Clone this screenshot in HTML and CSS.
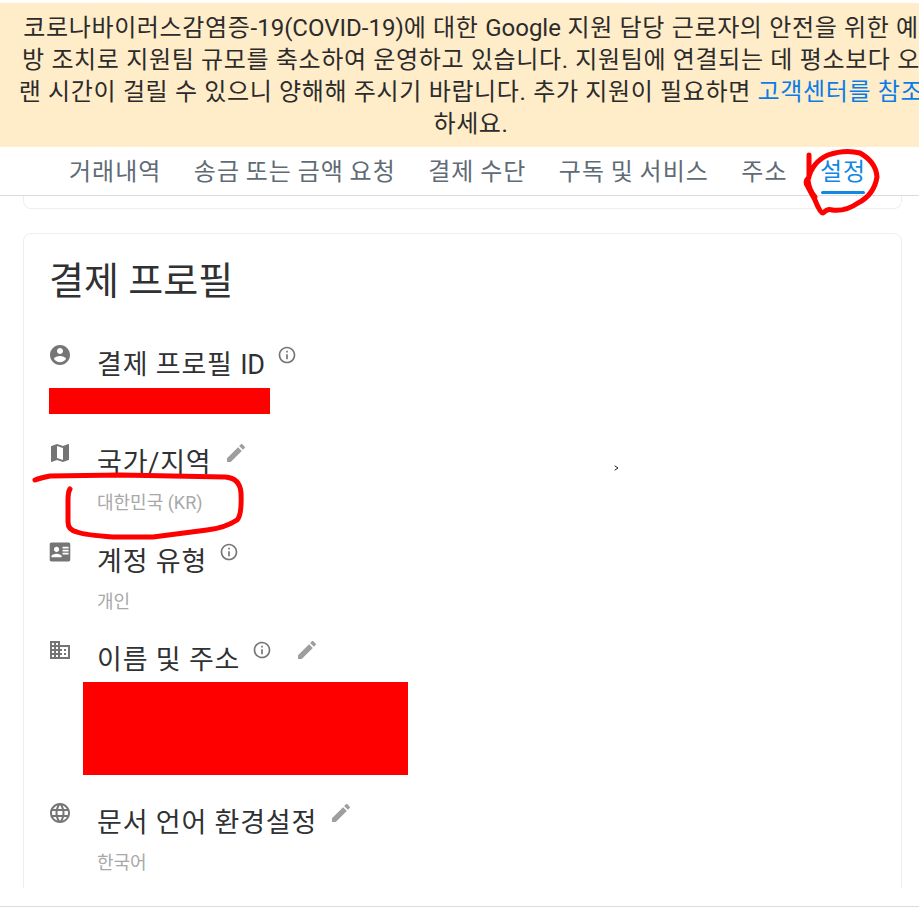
FILE: index.html
```html
<!DOCTYPE html>
<html lang="ko">
<head>
  <meta charset="UTF-8" />
  <title>결제 프로필</title>
  <link rel="stylesheet" href="styles.css">
</head>
<body>
  <svg class="icon-defs" width="0" height="0">
    <symbol id="i-account" viewBox="0 0 24 24"><path d="M12 2C6.48 2 2 6.48 2 12s4.48 10 10 10 10-4.48 10-10S17.52 2 12 2zm0 3c1.66 0 3 1.34 3 3s-1.34 3-3 3-3-1.34-3-3 1.34-3 3-3zm0 14.2c-2.5 0-4.71-1.28-6-3.22.03-1.99 4-3.08 6-3.08 1.99 0 5.97 1.09 6 3.08-1.29 1.94-3.5 3.22-6 3.22z"/></symbol>
    <symbol id="i-map" viewBox="0 0 24 24"><path d="M20.5 3l-.16.03L15 5.1 9 3 3.36 4.9c-.21.07-.36.25-.36.48V20.5c0 .28.22.5.5.5l.16-.03L9 18.9l6 2.1 5.64-1.9c.21-.07.36-.25.36-.48V3.5c0-.28-.22-.5-.5-.5zM15 19l-6-2.11V5l6 2.11V19z"/></symbol>
    <symbol id="i-contact" viewBox="-2 -2 28 28"><path fill-rule="evenodd" d="M22 1H2C.9 1 0 1.9 0 3v18c0 1.1.9 2 2 2h20c1.1 0 2-.9 2-2V3c0-1.1-.9-2-2-2zM8 6c1.66 0 3 1.34 3 3s-1.34 3-3 3-3-1.34-3-3 1.34-3 3-3zm6 12H2v-1c0-2 4-3.1 6-3.1s6 1.1 6 3.1v1zM15 6h7v2h-7zm0 3.5h7v2h-7zm0 3.5h7v2h-7z"/></symbol>
    <symbol id="i-domain" viewBox="0 0 24 24"><path d="M12 7V3H2v18h20V7H10zM6 19H4v-2h2v2zm0-4H4v-2h2v2zm0-4H4V9h2v2zm0-4H4V5h2v2zm4 12H8v-2h2v2zm0-4H8v-2h2v2zm0-4H8V9h2v2zm0-4H8V5h2v2zm10 12h-8v-2h2v-2h-2v-2h2v-2h-2V9h8v10zm-2-8h-2v2h2v-2zm0 4h-2v2h2v-2z"/></symbol>
    <symbol id="i-language" viewBox="0 0 24 24"><path d="M11.99 2C6.47 2 2 6.48 2 12s4.47 10 9.99 10C17.52 22 22 17.52 22 12S17.52 2 11.99 2zm6.93 6h-2.95c-.32-1.25-.78-2.45-1.38-3.56 1.84.63 3.37 1.91 4.33 3.56zM12 4.04c.83 1.2 1.48 2.53 1.91 3.96h-3.82c.43-1.43 1.08-2.76 1.91-3.96zM4.26 14C4.1 13.36 4 12.69 4 12s.1-1.36.26-2h3.38c-.08.66-.14 1.32-.14 2 0 .68.06 1.34.14 2H4.26zm.82 2h2.95c.32 1.25.78 2.45 1.38 3.56-1.84-.63-3.37-1.9-4.33-3.56zm2.95-8H5.08c.96-1.66 2.49-2.93 4.33-3.56C8.81 5.55 8.35 6.75 8.03 8zM12 19.96c-.83-1.2-1.48-2.53-1.91-3.96h3.82c-.43 1.43-1.08 2.76-1.91 3.96zM14.34 14H9.66c-.09-.66-.16-1.32-.16-2 0-.68.07-1.35.16-2h4.68c.09.65.16 1.32.16 2 0 .68-.07 1.34-.16 2zm.25 5.56c.6-1.11 1.06-2.31 1.38-3.56h2.95c-.96 1.65-2.49 2.93-4.33 3.56zM16.36 14c.08-.66.14-1.32.14-2 0-.68-.06-1.34-.14-2h3.38c.16.64.26 1.31.26 2s-.1 1.36-.26 2h-3.38z"/></symbol>
    <symbol id="i-info" viewBox="0 0 24 24"><path d="M11 7h2v2h-2zm0 4h2v6h-2zm1-9C6.48 2 2 6.48 2 12s4.48 10 10 10 10-4.48 10-10S17.52 2 12 2zm0 18c-4.41 0-8-3.59-8-8s3.59-8 8-8 8 3.59 8 8-3.59 8-8 8z"/></symbol>
    <symbol id="i-edit" viewBox="0 0 24 24"><path d="M3 17.25V21h3.75L17.81 9.94l-3.75-3.75L3 17.25zM20.71 7.04c.39-.39.39-1.02 0-1.41l-2.34-2.34c-.39-.39-1.02-.39-1.41 0l-1.83 1.83 3.75 3.75 1.83-1.83z"/></symbol>
  </svg>

  <div class="notice">
    코로나바이러스감염증<span class="latin">-19(COVID-19)</span>에 대한 <span class="latin">Google</span> 지원 담당 근로자의 안전을 위한 예<br>
    방 조치로 지원팀 규모를 축소하여 운영하고 있습니다. 지원팀에 연결되는 데 평소보다 오<br>
    랜 시간이 걸릴 수 있으니 양해해 주시기 바랍니다. 추가 지원이 필요하면 <a href="#">고객센터를 참조</a><br>
    하세요.
  </div>

  <nav class="tabs">
    <a href="#">거래내역</a>
    <a href="#">송금 또는 금액 요청</a>
    <a href="#">결제 수단</a>
    <a href="#">구독 및 서비스</a>
    <a href="#">주소</a>
    <a href="#" class="active">설정</a>
  </nav>

  <main class="content">
    <div class="card-stub"></div>

    <section class="card">
      <h1>결제 프로필</h1>

      <div class="row row-id">
        <svg class="row-icon"><use href="#i-account"/></svg>
        <div class="label"><span>결제 프로필 <span class="latin">ID</span></span> <svg class="info"><use href="#i-info"/></svg></div>
      </div>
      <div class="redact redact-id"></div>

      <div class="row row-country">
        <svg class="row-icon"><use href="#i-map"/></svg>
        <div>
          <div class="label">국가/지역 <svg class="edit"><use href="#i-edit"/></svg></div>
          <div class="value">대한민국 (KR)</div>
        </div>
      </div>

      <div class="row row-type">
        <svg class="row-icon"><use href="#i-contact"/></svg>
        <div>
          <div class="label">계정 유형 <svg class="info"><use href="#i-info"/></svg></div>
          <div class="value">개인</div>
        </div>
      </div>

      <div class="row row-name">
        <svg class="row-icon"><use href="#i-domain"/></svg>
        <div class="label">이름 및 주소 <svg class="info"><use href="#i-info"/></svg> <svg class="edit edit-far"><use href="#i-edit"/></svg></div>
      </div>
      <div class="redact redact-name"></div>

      <div class="row row-lang">
        <svg class="row-icon"><use href="#i-language"/></svg>
        <div>
          <div class="label">문서 언어 환경설정 <svg class="edit"><use href="#i-edit"/></svg></div>
          <div class="value">한국어</div>
        </div>
      </div>
    </section>
  </main>

  <footer class="page-foot"></footer>

  <!-- hand drawn marks on top of the screenshot -->
  <svg class="scribble" width="919" height="910" viewBox="0 0 919 910">
    <path d="M809 155 L809 177 Q804 182 808 187 L815 200 Q820 213 823 213 Q828 208 832 210 Q845 212 858 203 Q874 195 877 177 Q876 162 860 153 Q845 149 828 155 Q812 162 808 180 Q809 190 815 197"/>
    <path d="M35 480 Q40 478 50 476 L120 475 L225 477 Q240 478 241 493 Q242 515 237 520 Q225 528 207 530 L153 537 L113 537 Q85 535 77 532 Q68 530 68 522 L68 500 Q68 492 70 489"/>
    <path class="tick" d="M615 466 L618 468 L615 470"/>
  </svg>
</body>
</html>
```

FILE: styles.css
```css
* {
  box-sizing: border-box;
  margin: 0;
  padding: 0;
}

html,
body {
  height: 910px;
  overflow: hidden;
}

body {
  position: relative;
  width: 919px;
  padding-top: 3px;
  background: #fff;
  color: #2f3133;
  font-family: Roboto, "Noto Sans CJK KR", sans-serif;
}

a {
  text-decoration: none;
}

.icon-defs {
  position: absolute;
}

.notice {
  width: 942px;
  height: 144px;
  padding-top: 9px;
  background: #ffecc9;
  color: #2b2b2b;
  font-size: 24px;
  letter-spacing: 0.65px;
  line-height: 32px;
  text-align: center;
  white-space: nowrap;
}

.notice a {
  color: #0a7ce8;
}

.latin {
  letter-spacing: 0;
}

.tabs {
  display: flex;
  gap: 32.5px;
  height: 49px;
  padding-left: 69px;
  border-bottom: 1px solid #dcdcdc;
  font-size: 24px;
  letter-spacing: 1px;
  word-spacing: -1.2px;
  line-height: 50px;
}

.tabs a {
  position: relative;
  color: #5f6b75;
  white-space: nowrap;
}

.tabs a.active {
  color: #1088e4;
}

.tabs a.active::after {
  content: "";
  position: absolute;
  left: 1px;
  right: 1px;
  bottom: 1px;
  height: 3px;
  border-radius: 2px;
  background: #1088e4;
}

.content {
  height: 692px;
  padding: 0 17px 0 23px;
  overflow: hidden;
}

.card-stub {
  height: 13px;
  border: 1px solid #eeeeee;
  border-top: none;
  border-radius: 0 0 8px 8px;
}

.card {
  height: 700px;
  margin-top: 24px;
  padding: 18px 25px 0;
  border: 1px solid #eeeeee;
  border-radius: 8px;
}

h1 {
  height: 60px;
  margin-bottom: 31px;
  color: #2f3133;
  font-size: 38px;
  font-weight: 400;
  line-height: 58px;
}

.row {
  display: flex;
  gap: 25px;
}

.row-icon {
  flex: none;
  width: 24px;
  height: 24px;
  margin-left: -1px;
  fill: #757575;
}

.label {
  display: flex;
  align-items: flex-start;
  gap: 12px;
  height: 40px;
  font-size: 27px;
  letter-spacing: 0.8px;
  line-height: 44px;
  white-space: nowrap;
}

.label .latin {
  letter-spacing: -0.2px;
}

.value {
  height: 40px;
  color: #a8a8a8;
  font-size: 18px;
  line-height: 44px;
}

.info {
  width: 20px;
  height: 20px;
  margin-top: 2px;
  fill: #757575;
}

.edit {
  width: 24px;
  height: 24px;
  margin-top: 0;
  fill: #9e9e9e;
}

.edit-far {
  margin-left: 11px;
}

.redact {
  background: #ff0000;
}

.redact-id {
  width: 221px;
  height: 26px;
  margin-top: 5px;
}

.redact-name {
  width: 325px;
  height: 93px;
  margin: 4px 0 26px 34px;
}

.row-country {
  margin-top: 27px;
}

.row-type {
  margin-top: 19px;
}

.row-name {
  margin-top: 18px;
}

.page-foot {
  height: 1px;
  margin-top: 18px;
  background: #dcdcdc;
}

.scribble {
  position: absolute;
  left: 0;
  top: 0;
  fill: none;
  stroke: #ff0000;
  stroke-width: 5;
  stroke-linejoin: round;
  stroke-linecap: round;
}

.scribble .tick {
  stroke: #222;
  stroke-width: 1;
}
```
